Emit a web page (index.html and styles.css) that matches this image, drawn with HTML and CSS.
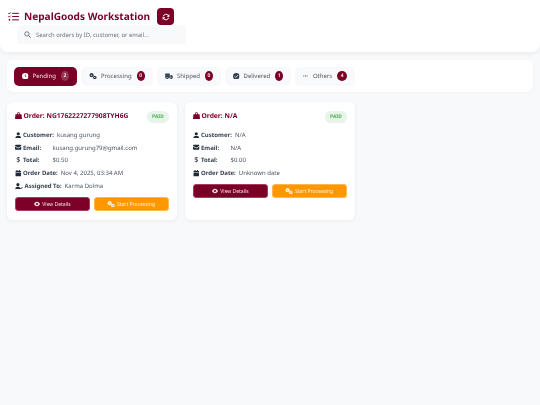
FILE: index.html
```html
<!DOCTYPE html>
<html lang="en">
<head>
<meta charset="utf-8">
<title>NepalGoods Workstation</title>
<link rel="stylesheet" href="styles.css">
</head>
<body>
<svg class="defs" width="0" height="0" aria-hidden="true">
  <defs>
    <symbol id="i-bag" viewBox="0 0 12 12"><path fill="currentColor" d="M3.500 4V3a2.500 2.500 0 0 1 5 0v1h2.700l.8 8H0l.8-8zm1.200 0h2.600V3a1.300 1.300 0 0 0-2.600 0z"/></symbol>
    <symbol id="i-user" viewBox="0 0 12 12"><circle cx="6" cy="3.200" r="2.900" fill="currentColor"/><path fill="currentColor" d="M.5 12C.5 8.500 3 7 6 7s5.500 1.500 5.500 5z"/></symbol>
    <symbol id="i-mail" viewBox="0 0 12 12"><path fill="currentColor" d="M1.500 1.500h9A1.500 1.500 0 0 1 12 3L6 6.800 0 3a1.500 1.500 0 0 1 1.500-1.500zM0 4.700l6 3.800 6-3.800V9a1.500 1.500 0 0 1-1.500 1.500h-9A1.500 1.500 0 0 1 0 9z"/></symbol>
    <symbol id="i-cal" viewBox="0 0 12 12"><path fill="currentColor" d="M3 0h1.500v1.500h3V0H9v1.500h1A1 1 0 0 1 11 2.500V4H1V2.500a1 1 0 0 1 1-1h1zM1 5h10v6a1 1 0 0 1-1 1H2a1 1 0 0 1-1-1z"/></symbol>
    <symbol id="i-assign" viewBox="0 0 14 12"><circle cx="5" cy="3" r="2.900" fill="currentColor"/><path fill="currentColor" d="M0 12C0 8.500 2 7 5 7c1.500 0 2.700.4 3.500 1.100L10 10l-1 2z"/><path fill="none" stroke="currentColor" stroke-width="1.600" d="M8.800 8.800l2 2 2.700-3.500"/></symbol>
    <symbol id="i-gears" viewBox="0 0 14 12"><circle cx="4.500" cy="4" r="3.800" fill="currentColor"/><circle cx="10.300" cy="8.200" r="3.300" fill="currentColor"/><circle cx="4.500" cy="4" r="1" fill="var(--hole, #f8f9fb)"/><circle cx="10.300" cy="8.200" r="1" fill="var(--hole, #f8f9fb)"/></symbol>
    <symbol id="i-eye" viewBox="0 0 12 12"><path fill="currentColor" fill-rule="evenodd" d="M6 1.500c3 0 5 2.800 6 4.500-1 1.700-3 4.500-6 4.500S1 7.700 0 6c1-1.700 3-4.500 6-4.500zm0 2.300a2.200 2.200 0 1 0 0 4.400 2.200 2.200 0 0 0 0-4.400z"/></symbol>
    <symbol id="i-clock" viewBox="0 0 12 12"><circle cx="6" cy="6" r="6" fill="currentColor"/><path fill="none" stroke="#7b0028" stroke-width="1.300" d="M6 2.700v3.500l2.200 1.400"/></symbol>
    <symbol id="i-truck" viewBox="0 0 14 12"><path fill="currentColor" d="M0 1h8.500v8.500H0zM9.500 3.500H12l2 2.500v3.500H9.500z"/><circle cx="3.500" cy="9.800" r="2" fill="currentColor" stroke="#f8f9fb" stroke-width=".6"/><circle cx="11" cy="9.800" r="2" fill="currentColor" stroke="#f8f9fb" stroke-width=".6"/></symbol>
    <symbol id="i-check" viewBox="0 0 12 12"><circle cx="6" cy="6" r="6" fill="currentColor"/><path fill="none" stroke="#f8f9fb" stroke-width="1.500" d="M3.200 6.200l2 2 3.600-4.200"/></symbol>
  </defs>
</svg>

<header class="topbar">
  <div class="title-row">
    <svg class="logo" viewBox="0 0 12 10" aria-hidden="true"><path fill="none" stroke="currentColor" stroke-width="1.100" d="M.3 1.300l.9.9L2.800.5M.3 4.900l.9.9 1.600-1.700M4.500 1.500H12M4.500 5H12M4.500 8.700H12"/><circle cx="1.500" cy="8.700" r="1" fill="currentColor"/></svg>
    <h1>NepalGoods Workstation</h1>
    <button class="refresh" aria-label="Refresh">
      <svg viewBox="0 0 12 12" aria-hidden="true"><path fill="none" stroke="#fff" stroke-width="1.500" d="M2 5a4.200 4.200 0 0 1 7.400-1.500L10.500 5M10 7a4.200 4.200 0 0 1-7.400 1.500L1.500 7"/><path fill="#fff" d="M11 1.500V5.500H7zM1 10.500V6.500h4z"/></svg>
    </button>
  </div>
  <div class="search">
    <svg class="search-icon" viewBox="0 0 12 12" aria-hidden="true"><circle cx="5" cy="5" r="3.700" fill="none" stroke="currentColor" stroke-width="1.300"/><path stroke="currentColor" stroke-width="1.500" d="M8 8l3.500 3.500"/></svg>
    <span>Search orders by ID, customer, or email...</span>
  </div>
</header>

<nav class="tabs">
  <a class="tab active"><svg class="tab-icon"><use href="#i-clock"/></svg>Pending<b class="count">2</b></a>
  <a class="tab proc"><svg class="tab-icon wide"><use href="#i-gears"/></svg>Processing<b class="count">0</b></a>
  <a class="tab ship"><svg class="tab-icon wide"><use href="#i-truck"/></svg>Shipped<b class="count">0</b></a>
  <a class="tab deliv"><svg class="tab-icon"><use href="#i-check"/></svg>Delivered<b class="count">1</b></a>
  <a class="tab others"><span class="dots">···</span>Others<b class="count">4</b></a>
</nav>

<main class="orders">
  <article class="card">
    <div class="card-head">
      <h2><svg class="ic"><use href="#i-bag"/></svg>Order: NG1762227277908TYH6G</h2>
      <span class="paid">PAID</span>
    </div>
    <p class="row"><svg class="ic"><use href="#i-user"/></svg><strong>Customer:</strong><span>kusang gurung</span></p>
    <p class="row"><svg class="ic"><use href="#i-mail"/></svg><strong class="gap">Email:</strong><span>kusang.gurung79@gmail.com</span></p>
    <p class="row"><span class="dollar">$</span><strong class="gap">Total:</strong><span>$0.50</span></p>
    <p class="row"><svg class="ic"><use href="#i-cal"/></svg><strong>Order Date:</strong><span>Nov 4, 2025, 03:34 AM</span></p>
    <p class="row"><svg class="ic wide"><use href="#i-assign"/></svg><strong>Assigned To:</strong><span>Karma Dolma</span></p>
    <div class="actions">
      <button class="btn view"><svg class="ic"><use href="#i-eye"/></svg>View Details</button>
      <button class="btn start"><svg class="ic wide"><use href="#i-gears"/></svg>Start Processing</button>
    </div>
  </article>
  <article class="card">
    <div class="card-head">
      <h2><svg class="ic"><use href="#i-bag"/></svg>Order: N/A</h2>
      <span class="paid">PAID</span>
    </div>
    <p class="row"><svg class="ic"><use href="#i-user"/></svg><strong>Customer:</strong><span>N/A</span></p>
    <p class="row"><svg class="ic"><use href="#i-mail"/></svg><strong class="gap">Email:</strong><span>N/A</span></p>
    <p class="row"><span class="dollar">$</span><strong class="gap">Total:</strong><span>$0.00</span></p>
    <p class="row"><svg class="ic"><use href="#i-cal"/></svg><strong>Order Date:</strong><span>Unknown date</span></p>
    <div class="actions">
      <button class="btn view"><svg class="ic"><use href="#i-eye"/></svg>View Details</button>
      <button class="btn start"><svg class="ic wide"><use href="#i-gears"/></svg>Start Processing</button>
    </div>
  </article>
</main>
</body>
</html>
```

FILE: styles.css
```css
* { box-sizing: border-box; }
html, body { margin: 0; padding: 0; }
body {
  width: 540px;
  height: 405px;
  overflow: hidden;
  background: #f8f9fb;
  font-family: "Noto Sans", "Open Sans", sans-serif;
  text-rendering: geometricPrecision;
  color: #374151;
}
.defs { position: absolute; }
.topbar, .tabs, .orders { will-change: transform; }

.topbar {
  height: 52px;
  padding: 8px 8px 0 8px;
  background: #fff;
  border-radius: 0 0 8px 8px;
  box-shadow: 0 1px 5px rgba(0,0,0,.08);
}
.title-row { display: flex; align-items: center; height: 17px; }
.logo { width: 11px; height: 9px; color: #7b0028; margin-right: 5px; }
h1 { margin: 0; font-size: 10.100px; font-weight: 700; color: #7b0028; line-height: 17px; white-space: nowrap; }
.refresh {
  width: 17px; height: 17px; margin-left: 7px; padding: 0;
  border: 0; border-radius: 4px; background: #7b0028;
  display: flex; align-items: center; justify-content: center;
}
.refresh svg { width: 8px; height: 8px; }
.search {
  display: flex; align-items: center;
  width: 169px; height: 19px; margin: 0 0 0 9px;
  padding-left: 7px;
  background: #f8f9fb; border-radius: 4px;
  font-size: 5.900px; color: #6b7280;
}
.search-icon { width: 7px; height: 7px; color: #4b5563; margin-right: 5px; }

.tabs {
  display: flex; align-items: center; gap: 4px;
  margin: 8px 7px 0 7px; height: 32px; padding: 0 7px;
  background: #fff; border-radius: 6px;
  box-shadow: 0 1px 3px rgba(0,0,0,.04);
}
.tab {
  display: flex; align-items: center; height: 19px; padding: 0 8px;
  border-radius: 5px; background: #f8f9fb;
  font-size: 6px; color: #4b5563; white-space: nowrap;
}
.tab.active { background: #7b0028; color: #f3dbe3; width: 63px; padding-left: 8px; }
.tab.proc { width: 72px; }
.tab.ship { width: 64px; }
.tab.deliv { width: 66px; }
.tab.others { width: 60px; }
.tab-icon { width: 6.500px; height: 6.500px; margin-right: 4px; color: #374151; flex: none; }
.tab-icon.wide { width: 8px; }
.tab.active .tab-icon { color: #fff; }
.dots { width: 6px; margin-right: 4px; font-weight: 700; color: #374151; line-height: 1; }
.count {
  display: flex; align-items: center; justify-content: center;
  width: 10px; height: 10px; margin-left: 5px;
  border-radius: 50%; background: #7b0028; color: #fff;
  font-size: 5px; font-weight: 600;
}
.tab.active .count { background: rgba(255,255,255,.2); }

.orders {
  display: grid; grid-template-columns: 170px 170px; gap: 8px;
  margin: 10px 7px 0 7px;
}
.card {
  height: 118px; padding: 8px 8px 0 8px;
  background: #fff; border-radius: 6px;
  box-shadow: 0 1px 4px rgba(0,0,0,.06);
}
.card-head { display: flex; justify-content: space-between; align-items: center; height: 13px; margin-bottom: 5.500px; }
h2 { margin: 0; font-size: 6.700px; font-weight: 700; color: #7b0028; display: flex; align-items: center; white-space: nowrap; line-height: 10px; padding-bottom: 2px; }
h2 .ic { width: 7px; height: 7px; margin-right: 1.500px; }
.paid {
  width: 22px; height: 12px; border-radius: 6px;
  background: #e6f4ea; color: #4caf50;
  font-size: 4.800px; font-weight: 700; letter-spacing: .02em;
  display: flex; align-items: center; justify-content: center;
}
.ic { width: 6.500px; height: 6.500px; margin-right: 1.500px; flex: none; }
.ic.wide { width: 8px; }
.row {
  margin: 0; height: 12.800px; display: flex; align-items: center;
  font-size: 6px; color: #4b5563; white-space: nowrap;
}
.row .ic { color: #1f2937; }
.row strong { font-weight: 700; color: #374151; margin-right: 3px; }
.row strong.gap { width: 28.500px; margin-right: 1px; }
.dollar { width: 6.500px; margin-right: 1.500px; color: #1f2937; font-weight: 500; font-size: 7px; line-height: 1; padding-top: 1px; text-align: center; }
.actions { display: grid; grid-template-columns: 75px 75px; gap: 3.500px; margin-top: 4.500px; }
.btn {
  height: 14px; padding: 0; border-radius: 3px;
  display: flex; align-items: center; justify-content: center;
  font: 400 5px "Noto Sans", sans-serif; color: #f3dbe3;
}
.btn .ic { margin-right: 2px; }
.view { background: #7b0028; border: 1px solid #a93b60; }
.start { background: #ff9800; border: 1px solid #ffb84d; color: #fff0d6; --hole: #ff9800; }
.view .ic { width: 6px; height: 6px; }
```
